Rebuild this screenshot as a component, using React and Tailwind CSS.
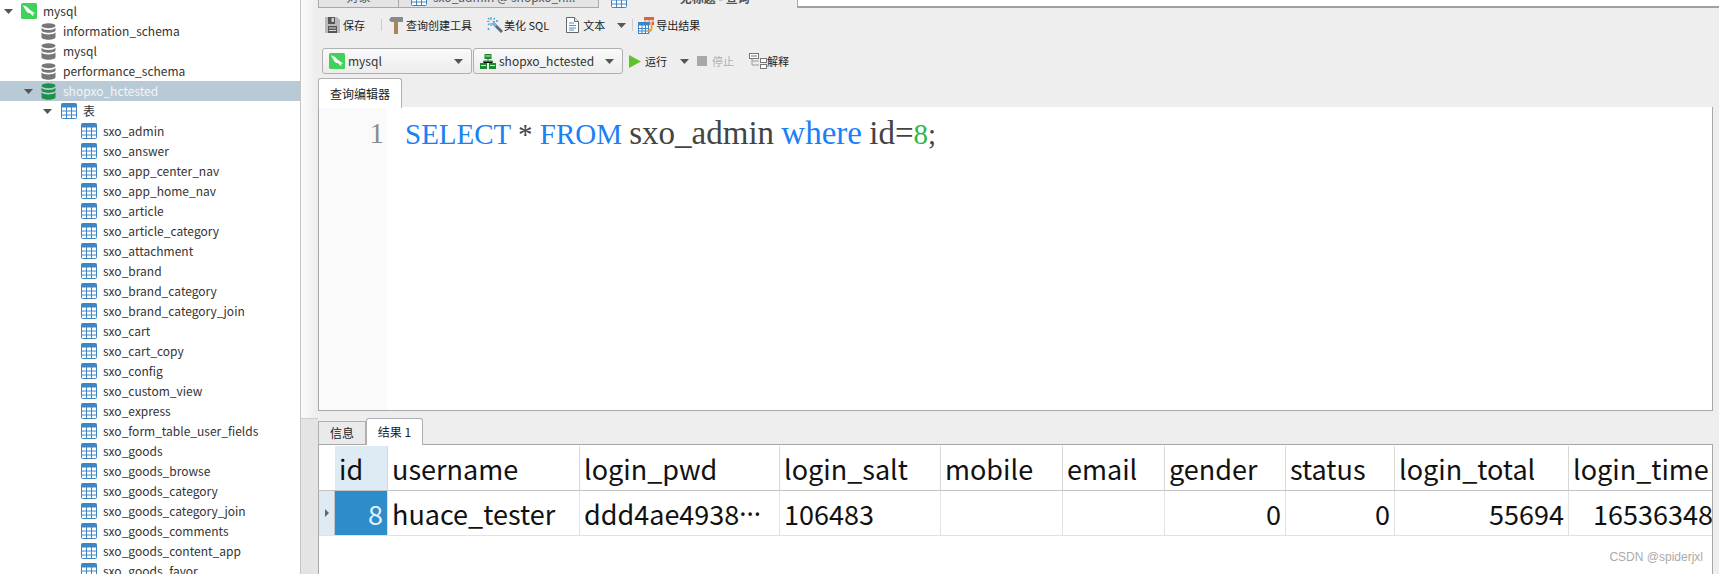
import React from 'react';

const FONT = '"Noto Sans CJK SC", "Noto Sans", sans-serif';

const tables = [
  'sxo_admin', 'sxo_answer', 'sxo_app_center_nav', 'sxo_app_home_nav', 'sxo_article', 'sxo_article_category',
  'sxo_attachment', 'sxo_brand', 'sxo_brand_category', 'sxo_brand_category_join', 'sxo_cart', 'sxo_cart_copy',
  'sxo_config', 'sxo_custom_view', 'sxo_express', 'sxo_form_table_user_fields', 'sxo_goods', 'sxo_goods_browse',
  'sxo_goods_category', 'sxo_goods_category_join', 'sxo_goods_comments', 'sxo_goods_content_app', 'sxo_goods_favor',
];

const columns = [
  { name: 'id', width: 'w-[53px]', value: '8', selected: true },
  { name: 'username', width: 'w-[192px]', value: 'huace_tester' },
  { name: 'login_pwd', width: 'w-[200px]', value: 'ddd4ae4938', truncated: true },
  { name: 'login_salt', width: 'w-[161px]', value: '106483' },
  { name: 'mobile', width: 'w-[122px]', value: '' },
  { name: 'email', width: 'w-[102px]', value: '' },
  { name: 'gender', width: 'w-[121px]', value: '0', right: true },
  { name: 'status', width: 'w-[109px]', value: '0', right: true },
  { name: 'login_total', width: 'w-[174px]', value: '55694', right: true },
  { name: 'login_time', width: 'w-[145px]', value: '16536348', clip: true },
];

function Caret({ className = '' }) {
  return (
    <svg width="9" height="5" viewBox="0 0 9 5" className={className}>
      <path d="M0 0h9L4.5 5z" fill="#555" />
    </svg>
  );
}

function MysqlIcon({ size = 16 }) {
  return (
    <svg width={size} height={size} viewBox="0 0 16 16" className="shrink-0">
      <rect width="16" height="16" rx="1.5" fill="#3fd15a" />
      <path d="M1.5 2.5c3 .2 4.8 1.400 6.300 3.200 1.200 1.400 2.700 2.300 4.200 3.200.9.500 1.700 1.200 2.200 2.600-1-.7-1.800-1-2.700-1.200.3 1 .7 2 1.300 3-1.500-.8-3-2-3.800-3.300-.9.200-1.800 0-2.500-.6C5 8.200 4.700 7 4 5.900 3.500 5 2.600 3.600 1.500 2.500z" fill="#fff" />
    </svg>
  );
}

function DbIcon({ color = '#777' }) {
  return (
    <svg width="15" height="17" viewBox="0 0 15 17" className="shrink-0">
      <ellipse cx="7.500" cy="2.800" rx="7" ry="2.500" fill={color} />
      <path d="M.5 4.800c1 1.700 3.800 2.200 7 2.200s6-.5 7-2.200v2.500c0 1.400-3.100 2.500-7 2.500s-7-1.100-7-2.500z" fill={color} />
      <path d="M.5 9.300c1 1.700 3.800 2.200 7 2.200s6-.5 7-2.200v5c0 1.400-3.100 2.500-7 2.500s-7-1.100-7-2.500z" fill={color} />
    </svg>
  );
}

function TableIcon({ size = 16, className = 'shrink-0' }) {
  return (
    <svg width={size} height={size} viewBox="0 0 16 16" className={className}>
      <rect x=".5" y=".5" width="15" height="15" rx="1" fill="#fff" stroke="#3d86c6" />
      <rect x=".5" y=".5" width="15" height="4" fill="#3d86c6" />
      <path d="M5.500 4v11.500M10.500 4v11.500M1 8h14M1 12h14" stroke="#3d86c6" />
    </svg>
  );
}

function SaveIcon() {
  return (
    <svg width="15" height="16" viewBox="0 0 15 16" className="shrink-0">
      <path d="M0 0h12l3 3v13H0z" fill="#b9b9b9" />
      <rect x="3" y="0" width="7" height="7" fill="#555" />
      <rect x="6.500" y="1" width="2.500" height="4" fill="#ccc" />
      <rect x="3" y="9" width="9" height="7" fill="#555" />
      <path d="M4 11h7M4 13.500h7" stroke="#ddd" />
    </svg>
  );
}

function HammerIcon() {
  return (
    <svg width="15" height="17" viewBox="0 0 15 17" className="shrink-0">
      <path d="M1 3l2-3h12v5H3z" fill="#8a8a8a" />
      <rect x="6" y="5" width="4" height="12" fill="#a9845f" />
    </svg>
  );
}

function WandIcon() {
  return (
    <svg width="16" height="16" viewBox="0 0 16 16" className="shrink-0">
      <path d="M6 6l9 9" stroke="#5a6d80" strokeWidth="3" />
      <path d="M6 6l3 3" stroke="#6fb5e8" strokeWidth="3" />
      <path d="M4 0v3M4 6v3M0 4.500h2.500M5.500 4.500H8M8 1L6.500 2.500M1 1l1.500 1.500M1 8l1.500-1.500M10 3v2M9 4h2M1.500 11v2M.5 12h2" stroke="#4aa3df" strokeWidth="1.200" />
    </svg>
  );
}

function DocIcon() {
  return (
    <svg width="13" height="16" viewBox="0 0 13 16" className="shrink-0">
      <path d="M.5.500h8l4 4v11H.5z" fill="#fff" stroke="#666" />
      <path d="M8.500.5v4h4" fill="#eee" stroke="#666" />
      <path d="M3 6h5M3 8.500h7M3 11h7M3 13h5" stroke="#4a90d0" />
    </svg>
  );
}

function ExportIcon() {
  return (
    <svg width="17" height="17" viewBox="0 0 17 17" className="shrink-0">
      <rect x="6" y="0" width="10" height="8" fill="#d9653b" />
      <path d="M9 3v5M13 3v5M6 4h10" stroke="#fff" />
      <rect x=".5" y="5.500" width="10" height="11" fill="#fff" stroke="#3d86c6" />
      <rect x=".5" y="5.500" width="10" height="3" fill="#3d86c6" />
      <path d="M4 8v8M7.500 8v8M1 11.500h9M1 14h9" stroke="#3d86c6" />
      <path d="M13.500 8v4c0 1.500-1 2-2.500 2" fill="none" stroke="#f0a020" strokeWidth="1.800" />
      <path d="M12 11.500L9.500 14l2.500 2.500" fill="#f0a020" />
    </svg>
  );
}

function SchemaIcon() {
  return (
    <svg width="16" height="15" viewBox="0 0 16 15" className="shrink-0">
      <rect x="4.500" y="0" width="7" height="5" fill="#1e8a2e" />
      <rect x="0" y="9" width="7" height="6" fill="#1e8a2e" />
      <rect x="9" y="9" width="7" height="6" fill="#1e8a2e" />
      <path d="M8 5v2M3.500 9V7h9v2M5.500 2h5M1 11.500h5M10 11.500h5" stroke="#fff" strokeWidth=".8" />
      <path d="M8 5v2M3.500 9V7h9v2" stroke="#1e8a2e" fill="none" />
    </svg>
  );
}

function ExplainIcon() {
  return (
    <svg width="18" height="16" viewBox="0 0 18 16" className="shrink-0">
      <rect x=".5" y=".5" width="9" height="5" fill="#fff" stroke="#777" />
      <path d="M2 3h6" stroke="#777" />
      <path d="M3 6v6h7M3 8h7" fill="none" stroke="#999" />
      <rect x="11.500" y="5.500" width="6" height="4" fill="#fff" stroke="#777" />
      <rect x="11.500" y="11.500" width="6" height="4" fill="#fff" stroke="#777" />
    </svg>
  );
}

function TreeRow({ pad, arrow, selected, icon, gap, children }) {
  return (
    <div className={`flex items-center h-5 text-[12px] whitespace-nowrap ${selected ? 'bg-[#b8cad6] text-[#f2f5f7]' : 'text-[#333]'}`}>
      <div className={`flex items-center justify-end shrink-0 ${pad}`}>{arrow && <Caret />}</div>
      <div className={`flex items-center ${gap}`}>
        {icon}
        <span>{children}</span>
      </div>
    </div>
  );
}

function Sidebar() {
  return (
    <div className="w-[301px] shrink-0 h-full overflow-hidden bg-white border-r border-[#c4c4c4] pt-px">
      <TreeRow pad="w-[21px] pr-[8px]" arrow icon={<MysqlIcon />} gap="gap-[6px]">mysql</TreeRow>
      {['information_schema', 'mysql', 'performance_schema'].map((name) => (
        <TreeRow key={name} pad="w-[41px]" icon={<DbIcon />} gap="gap-[7px]">{name}</TreeRow>
      ))}
      <TreeRow pad="w-[41px] pr-[8px]" arrow selected icon={<DbIcon color="#1c9147" />} gap="gap-[7px]">shopxo_hctested</TreeRow>
      <TreeRow pad="w-[61px] pr-[9px]" arrow icon={<TableIcon />} gap="gap-[6px]">表</TreeRow>
      {tables.map((name) => (
        <TreeRow key={name} pad="w-[81px]" icon={<TableIcon />} gap="gap-[6px]">{name}</TreeRow>
      ))}
    </div>
  );
}

function TopTabs() {
  return (
    <div className="flex h-[8px] overflow-hidden shrink-0 text-[12px] leading-[14px] text-[#555]">
      <div className="w-[80px] h-[8px] flex items-end justify-center bg-[#e4e4e4] border-l border-b border-[#a8a8a8]"><span className="mb-[3px]">对象</span></div>
      <div className="w-[200px] h-[8px] flex items-end gap-[6px] pl-[12px] bg-[#e4e4e4] border-l border-b border-[#a8a8a8]">
        <TableIcon className="shrink-0 mb-[1px]" />
        <span className="mb-[3px]">sxo_admin @ shopxo_h...</span>
      </div>
      <div className="w-[200px] h-[8px] flex items-end gap-[6px] pl-[12px] bg-[#eee] border-l border-r border-[#a8a8a8]">
        <TableIcon className="shrink-0" />
        <span className="mb-[3px] ml-[38px] font-bold">* 无标题 - 查询</span>
      </div>
      <div className="flex-1 bg-white border-b-2 border-[#a0a0a0]" />
    </div>
  );
}

function Toolbar() {
  return (
    <div className="flex items-center h-[22px] mt-[6px] pl-[7px] text-[11px] text-[#222] whitespace-nowrap">
      <SaveIcon />
      <span className="ml-[3px]">保存</span>
      <div className="w-px h-[12px] bg-[#ccc] ml-[16px]" />
      <div className="ml-[6px]"><HammerIcon /></div>
      <span className="ml-[3px]">查询创建工具</span>
      <div className="ml-[15px]"><WandIcon /></div>
      <span className="ml-[1px]">美化 SQL</span>
      <div className="ml-[17px]"><DocIcon /></div>
      <span className="ml-[4px]">文本</span>
      <Caret className="ml-[12px]" />
      <div className="w-px h-[12px] bg-[#ccc] ml-[6px]" />
      <div className="ml-[5px]"><ExportIcon /></div>
      <span className="ml-[1px]">导出结果</span>
    </div>
  );
}

function Combo({ icon, label, width }) {
  return (
    <div className={`flex items-center h-[26px] ${width} pl-[6px] pr-[8px] rounded-[3px] border border-[#b0b0b0] bg-gradient-to-b from-[#fafafa] to-[#ececec] text-[12px] text-[#333]`}>
      {icon}
      <span className="ml-[3px] flex-1">{label}</span>
      <Caret />
    </div>
  );
}

function RunBar() {
  return (
    <div className="flex items-center mt-[12px] pl-[4px] text-[11px] text-[#222] whitespace-nowrap">
      <Combo icon={<MysqlIcon />} label="mysql" width="w-[150px]" />
      <div className="w-[1px]" />
      <Combo icon={<SchemaIcon />} label="shopxo_hctested" width="w-[150px]" />
      <svg width="12" height="13" viewBox="0 0 12 13" className="ml-[6px] shrink-0"><path d="M0 0l12 6.500L0 13z" fill="#5cc32c" /></svg>
      <span className="ml-[4px]">运行</span>
      <Caret className="ml-[13px]" />
      <div className="w-[10px] h-[10px] bg-[#a8a8a8] ml-[8px]" />
      <span className="ml-[5px] text-[#b0b0b0]">停止</span>
      <div className="ml-[15px]"><ExplainIcon /></div>
      <span>解释</span>
    </div>
  );
}

function Editor() {
  return (
    <div className="flex-1 flex min-h-0 mr-[6px] bg-white border-r border-b border-l border-[#a8a8a8] font-['Liberation_Serif',serif] text-[29px] leading-[36px]">
      <div className="w-[68px] shrink-0 bg-[#fafafa] text-right pr-[3px] pt-[8px] text-[#8a8a8a]">1</div>
      <div className="pl-[18px] pt-[8px] whitespace-pre text-[#444]">
        <span className="text-[#1a80f5]">SELECT</span> * <span className="text-[#1a80f5]">FROM</span> <span className="text-[33px]">sxo_admin</span> <span className="text-[33px] text-[#1a80f5]">where</span> <span className="text-[33px]">id=</span><span className="text-[#2cb84a]">8</span>;
      </div>
    </div>
  );
}

function ResultGrid() {
  return (
    <div className="relative h-[130px] mr-[6px] bg-white border-t border-l border-r border-[#a8a8a8] overflow-hidden text-[27px] text-[#111]">
      <div className="flex h-[45px] border-b border-[#c4c4c4] mt-px">
        <div className="w-[16px] shrink-0" />
        {columns.map((col) => (
          <div
            key={col.name}
            className={`${col.width} shrink-0 flex items-center pl-[4px] border-r border-[#d8d8d8] leading-none whitespace-nowrap ${col.selected ? 'bg-[#deebf5]' : ''}`}
          >
            {col.name}
          </div>
        ))}
      </div>
      <div className="flex h-[45px] border-b border-[#e2e2e2]">
        <div className="w-[16px] shrink-0 flex items-center justify-center bg-[#deebf5] border-r border-[#c4c4c4]">
          <svg width="4" height="8" viewBox="0 0 4 8"><path d="M0 0l4 4-4 4z" fill="#666" /></svg>
        </div>
        {columns.map((col) => (
          <div
            key={col.name}
            className={`${col.width} shrink-0 flex items-center px-[4px] border-r border-[#e2e2e2] leading-none whitespace-nowrap overflow-hidden ${col.right || col.selected ? 'justify-end' : ''} ${col.selected ? 'bg-[#2f8ccb] text-[#e4f0f8]' : ''} ${col.clip ? 'justify-end pr-0' : ''}`}
          >
            {col.value}
            {col.truncated && <span className="font-['Noto_Sans',sans-serif]">···</span>}
          </div>
        ))}
      </div>
      <span className="absolute right-[9px] bottom-[8px] text-[12px] font-['Liberation_Sans',sans-serif] text-[#aaa]">CSDN @spiderjxl</span>
    </div>
  );
}

export default function App() {
  return (
    <div className="flex w-[1719px] h-[574px] overflow-hidden bg-[#eee]" style={{ fontFamily: FONT }}>
      <Sidebar />
      <div className="w-[17px] shrink-0 flex flex-col">
        <div className="h-[418px] bg-gradient-to-r from-[#fbfbfb] to-[#ececec]" />
        <div className="flex-1 bg-[#e4e4e4] border-t border-[#d0d0d0]" />
      </div>
      <div className="flex-1 min-w-0 flex flex-col">
        <TopTabs />
        <Toolbar />
        <RunBar />
        <div className="flex mt-[4px] h-[30px] shrink-0 -mb-px">
          <div className="w-[84px] flex items-center justify-center bg-white rounded-t-[3px] border border-b-0 border-[#b0b0b0] text-[12px] text-[#222] z-10">查询编辑器</div>
        </div>
        <Editor />
        <div className="flex items-end h-[34px] shrink-0 text-[12px] text-[#222] -mb-px">
          <div className="w-[48px] h-[24px] flex items-center justify-center bg-[#eaeaea] border border-[#b0b0b0]">信息</div>
          <div className="w-[57px] h-[27px] flex items-center justify-center bg-white rounded-t-[3px] border border-b-0 border-[#b0b0b0] z-10">结果 1</div>
        </div>
        <ResultGrid />
      </div>
    </div>
  );
}
